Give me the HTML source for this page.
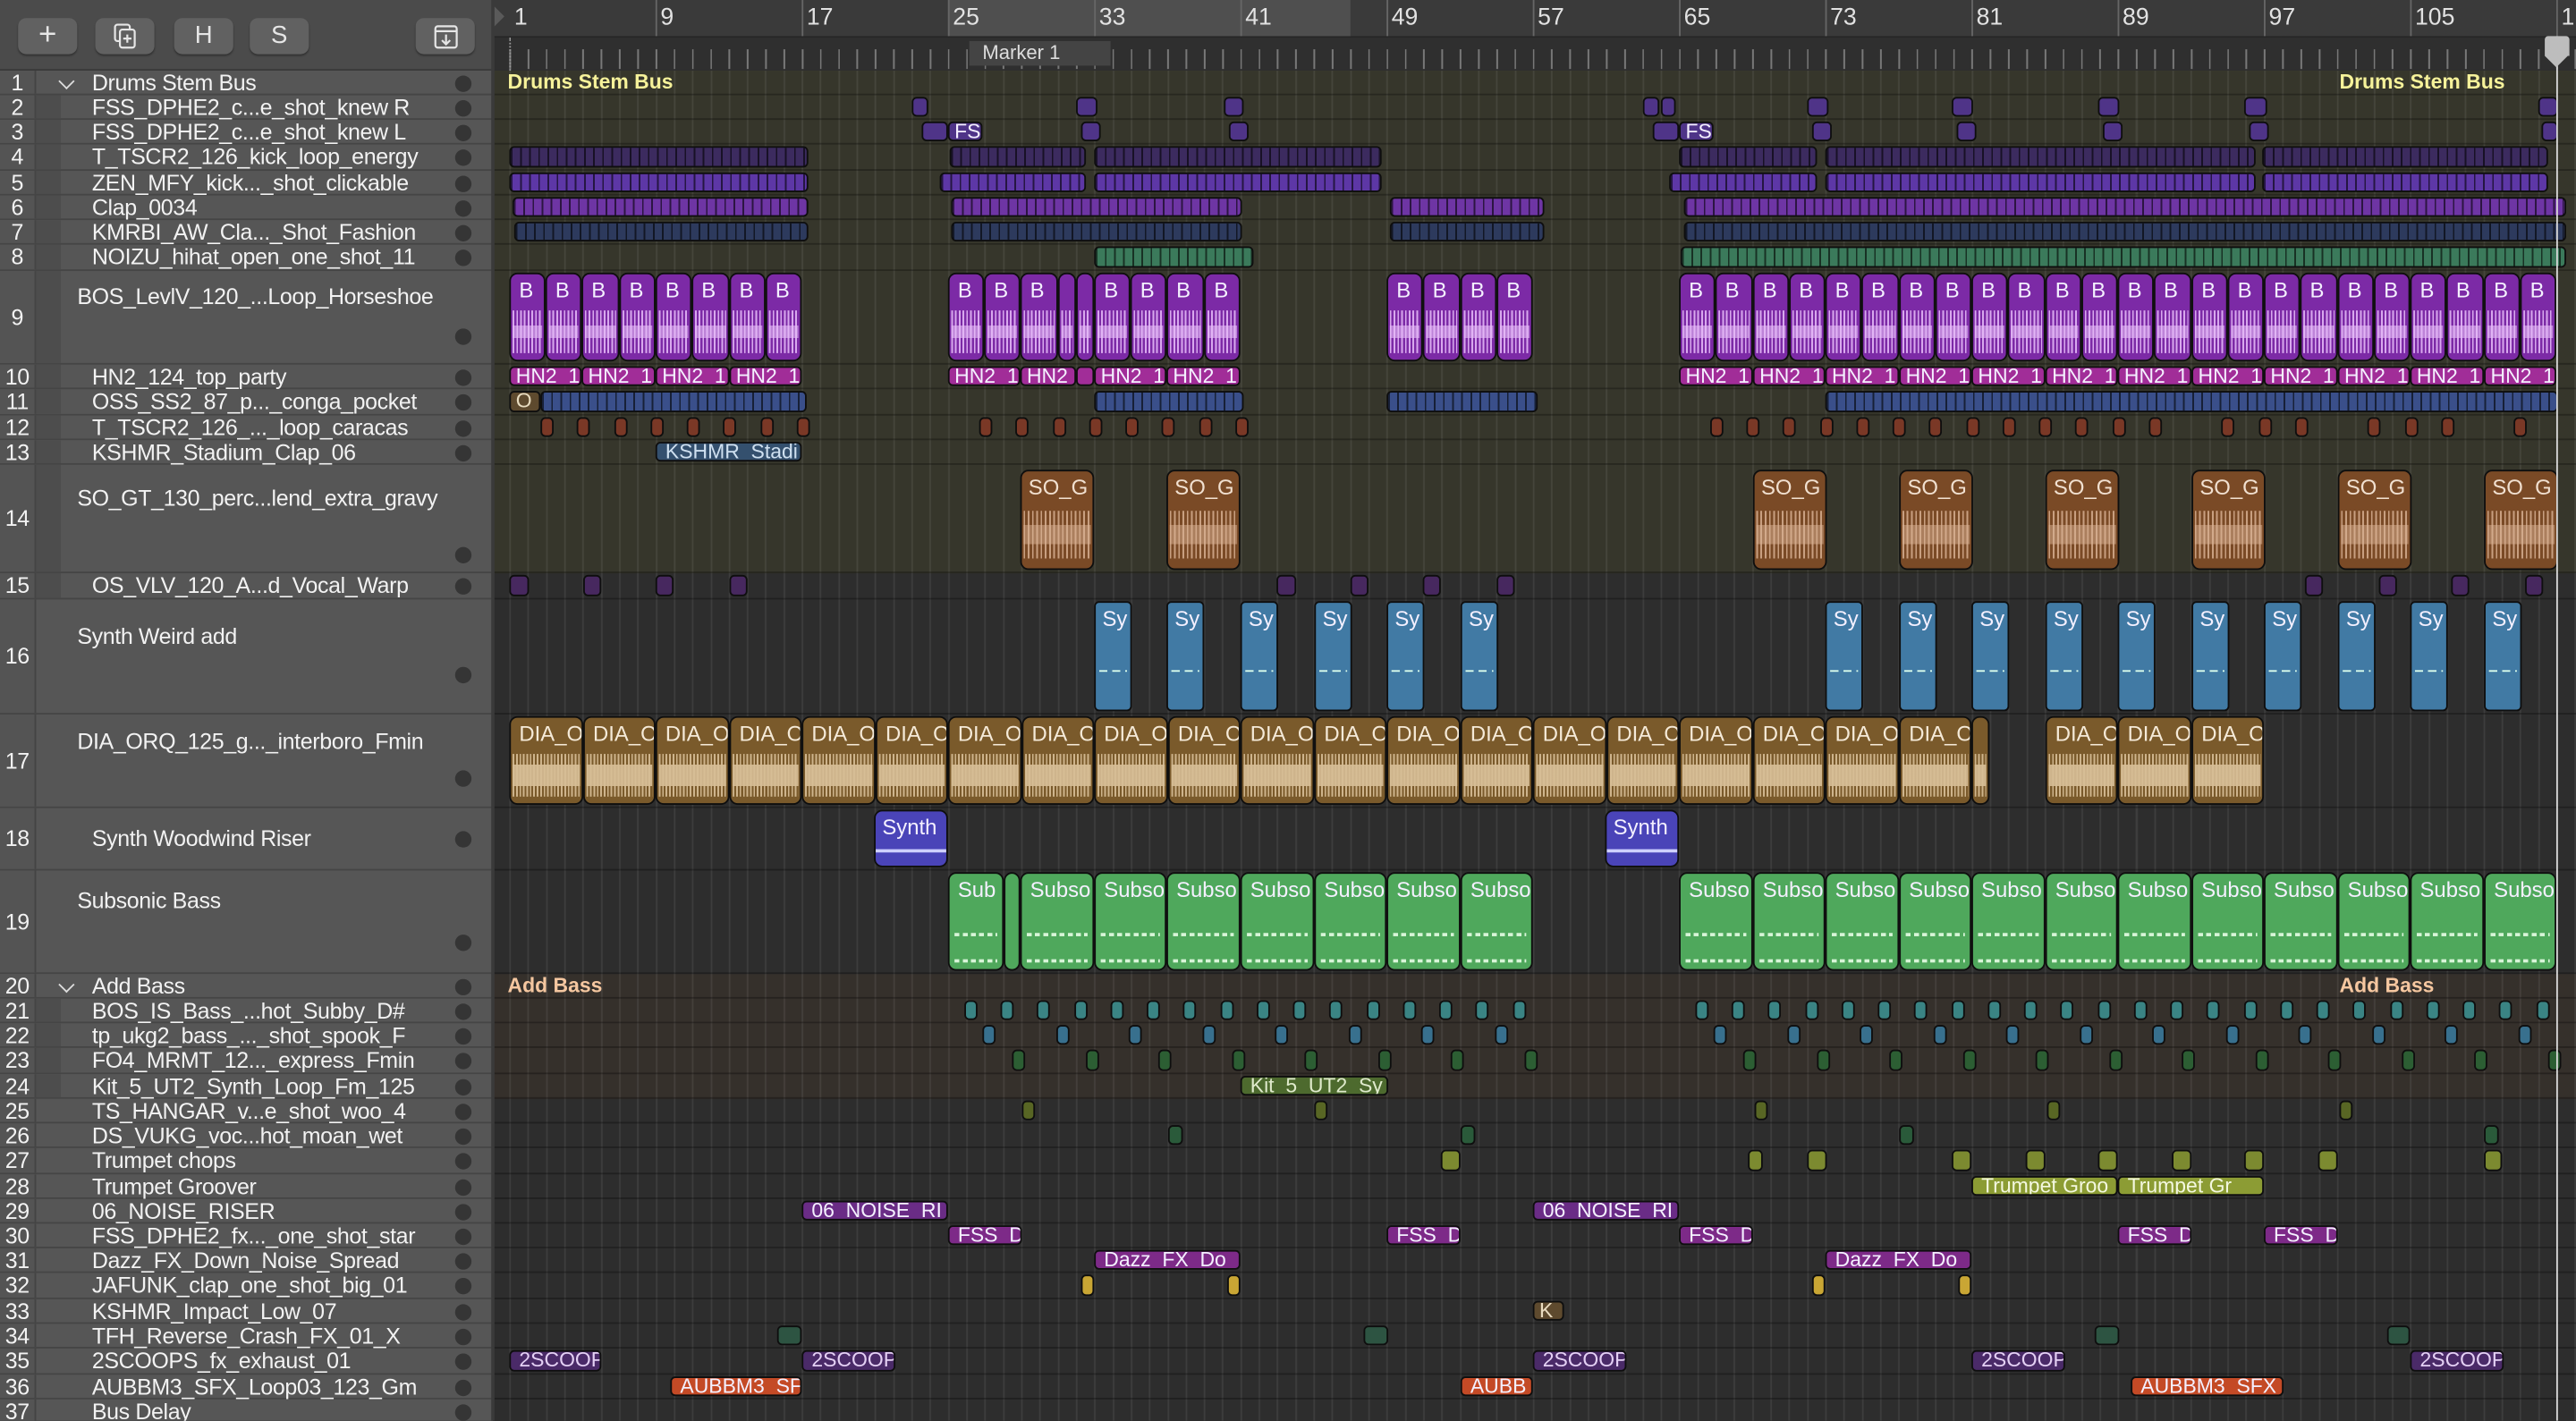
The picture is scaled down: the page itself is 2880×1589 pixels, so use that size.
<!DOCTYPE html><html><head><meta charset="utf-8"><style>
*{margin:0;padding:0}
html,body{width:2880px;height:1588px;overflow:hidden;background:#2d2d2d}
#s{position:absolute;left:0;top:0;width:1568px;height:865px;transform:scale(1.83673);transform-origin:0 0;font-family:"Liberation Sans",sans-serif;overflow:hidden;background:#2d2d2d}
.a{position:absolute}
#lp{position:absolute;left:0;top:0;width:300px;height:865px;background:#4d4d4d}
.btn{position:absolute;top:11px;width:36px;height:22px;background:#616161;border-radius:5px;box-shadow:0 1px 1px #333;color:#e6e6e6;font-size:15px;text-align:center;line-height:22px}
.lr{position:absolute;left:0;width:300px;border-bottom:1px solid #454545;box-sizing:border-box;background:#565656;color:#f2f2f2;font-size:13.6px;letter-spacing:-.2px}
.lr .n{position:absolute;left:0;width:21px;height:100%;background:#545454;border-right:1px solid #444;text-align:center;line-height:15px;top:0}
.lr .t{position:absolute;left:56px;white-space:nowrap;line-height:15px;top:0}
.lr .d{position:absolute;left:277px;width:10px;height:10px;border-radius:50%;background:#353535;top:2.5px}
.lr .g{position:absolute;left:22px;width:15px;top:0;height:100%;background:#4d4d4d}
.chev{position:absolute;left:37px;top:3px;width:6px;height:6px;border-right:1.3px solid #ddd;border-bottom:1.3px solid #ddd;transform:rotate(45deg)}
.row{position:absolute;left:0;width:1568px;border-bottom:1px solid rgba(0,0,0,.28);box-sizing:border-box}
b{position:absolute;top:1px;bottom:1px;border:1px solid #0e0e0e;border-radius:3px;box-sizing:border-box;color:#f4f0ff;font-weight:normal;font-size:12.5px;line-height:11.5px;padding-left:3px;overflow:hidden;white-space:nowrap}
.st{background-image:repeating-linear-gradient(90deg,rgba(0,0,0,.6) 0 1px,transparent 1px 5.56px)}
.pd{background-color:#3c2b5f}.pm{background-color:#5d37a6}.pv{background-color:#6e35a4}.nv{background-color:#2d3a5d}.gr{background-color:#3b7a5b}
.pu{background-color:#4f3488}
.B{background:#7c2aa6;border-radius:5px;padding:3px 0 0 5px;font-size:13px;line-height:14px}
.B i,.D i{position:absolute;left:1px;right:1px;top:22px;bottom:4px;background:repeating-linear-gradient(90deg,rgba(232,190,250,.85) 0 1px,transparent 1px 2.3px),linear-gradient(180deg,transparent 35%,rgba(232,190,250,.6) 35% 65%,transparent 65%)}
.hn{background:#a12d98}.bl{background-color:#3a4f8a}.br{background:#7a3826}.ks{background:#34506e;color:#cfe0f0}
.so{background:#7a4a26;border-radius:5px;padding:3px 0 0 4px;font-size:13px;line-height:14px;color:#f1e0d0}
.so i{position:absolute;left:1px;right:1px;top:24px;bottom:6px;background:repeating-linear-gradient(90deg,rgba(220,180,150,.8) 0 1px,transparent 1px 2.6px),linear-gradient(180deg,transparent 30%,rgba(220,180,150,.5) 30% 70%,transparent 70%)}
.vp{background:#47285f}
.sy{background:#417aa4;padding:3px 0 0 4px;font-size:13px;line-height:14px}
.sy i{position:absolute;left:2px;right:2px;top:41px;height:1px;background:repeating-linear-gradient(90deg,#dfe 0 5px,transparent 5px 8px)}
.D{background:#7a5a2b;border-radius:5px;padding:3px 0 0 5px;color:#f5ead8;font-size:13px;line-height:14px}
.D i{background:repeating-linear-gradient(90deg,rgba(215,190,150,.9) 0 1px,transparent 1px 2.1px),linear-gradient(180deg,transparent 25%,rgba(215,190,150,.9) 25% 75%,transparent 75%)}
.sn{background:#4a44b8;border-radius:5px;padding:3px 0 0 4px;font-size:13px;line-height:14px}
.sn i{position:absolute;left:0;right:0;top:23px;height:2px;background:#cfd0ff}
.sb{background:#4fa85c;border-radius:5px;padding:3px 0 0 5px;font-size:13px;line-height:14px}
.sb i{position:absolute;left:3px;right:3px;height:2px;background:repeating-linear-gradient(90deg,#d8f5d8 0 3px,transparent 3px 5px)}
.te{background:#3a8484}.tb{background:#38708e}.dg{background:#2c5e33}.kg{background:#4d6a2e;color:#dfeacc}
.ol{background:#586624}.g2{background:#2a5a3a}.o2{background:#7c8a30}.tg{background:#8c9c34;color:#f4f8e0}
.nz{background:#6a2c86}.fs{background:#7d2a88}.yl{background:#c9a634}.kb{background:#5e4a2e;color:#eadcc0}
.dk{background:#2d5442}.sc{background:#4a2a68;color:#e4d0f4}.or{background:#c44a26}
</style></head><body><div id="s">
<div class="a" style="left:300px;top:43px;width:1268px;height:306px;background:#36362b"></div>
<div class="a" style="left:300px;top:593px;width:1268px;height:76px;background:#35302b"></div>
<div class="a" style="left:300px;top:43px;width:1268px;height:822px;background-image:repeating-linear-gradient(90deg,rgba(255,255,255,.075) 0 1px,transparent 1px 11.125px);background-position:10px 0"></div>
<div class="a" style="left:300px;top:0;width:1268px;height:43px;background:#2f2f2f"></div>
<div class="a" style="left:300px;top:0;width:1268px;height:22px;background:#3a3a3a;border-bottom:1px solid #262626"></div>
<div class="a" style="left:577px;top:0;width:245px;height:22px;background:#4f4f4f"></div>
<div class="a" style="left:300px;top:23px;width:1268px;height:19px;background-image:repeating-linear-gradient(90deg,rgba(255,255,255,.35) 0 1px,transparent 1px 11.125px);background-position:10px 0;background-size:100% 12px;background-repeat:repeat-x;background-position-y:7px"></div>
<div class="a" style="left:300px;top:3px;width:0;height:0;border-top:7px solid transparent;border-bottom:7px solid transparent;border-left:7px solid #5a5a5a"></div>
<div class="a" style="left:590px;top:25px;width:86px;height:15px;background:#444;color:#ddd;font-size:12px;line-height:15px;padding-left:8px;box-sizing:border-box">Marker 1</div>
<div class="a" style="top:2px;left:0;width:1568px;height:20px;color:#e2e2e2;font-size:14.5px;line-height:18px">
<span class="a" style="left:313px">1</span><span class="a" style="left:402px">9</span><span class="a" style="left:491px">17</span><span class="a" style="left:580px">25</span><span class="a" style="left:669px">33</span><span class="a" style="left:758px">41</span><span class="a" style="left:847px">49</span><span class="a" style="left:936px">57</span><span class="a" style="left:1025px">65</span><span class="a" style="left:1114px">73</span><span class="a" style="left:1203px">81</span><span class="a" style="left:1292px">89</span><span class="a" style="left:1381px">97</span><span class="a" style="left:1470px">105</span><span class="a" style="left:1559px">1</span>
</div>
<div class="a" style="left:399px;top:0;width:1px;height:22px;background:#666;box-shadow:89px 0 #666,178px 0 #666,267px 0 #666,356px 0 #666,445px 0 #666,534px 0 #666,623px 0 #666,712px 0 #666,801px 0 #666,890px 0 #666,979px 0 #666,1068px 0 #666,1157px 0 #666"></div>
<div class="a" style="left:310px;top:23px;width:1px;height:20px;border-left:1px dotted #999"></div>

<div class="row" style="top:43px;height:15px"><span class="a" style="left:309px;top:0;color:#f6f29a;font-size:12.5px;font-weight:bold;line-height:15px">Drums Stem Bus</span><span class="a" style="left:1424px;top:0;color:#f6f29a;font-size:12.5px;font-weight:bold;line-height:15px">Drums Stem Bus</span></div>
<div class="row" style="top:58px;height:15px"><b class="pu" style="left:555px;width:10px"></b><b class="pu" style="left:655px;width:13px"></b><b class="pu" style="left:745px;width:12px"></b><b class="pu" style="left:1000px;width:10px"></b><b class="pu" style="left:1011px;width:9px"></b><b class="pu" style="left:1100px;width:13px"></b><b class="pu" style="left:1188px;width:13px"></b><b class="pu" style="left:1277px;width:13px"></b><b class="pu" style="left:1366px;width:14px"></b><b class="pu" style="left:1545px;width:12px"></b></div>
<div class="row" style="top:73px;height:15px"><b class="pu" style="left:561px;width:16px"></b><b class="pu" style="left:577px;width:21px;padding-left:3px">FS</b><b class="pu" style="left:658px;width:12px"></b><b class="pu" style="left:748px;width:12px"></b><b class="pu" style="left:1006px;width:16px"></b><b class="pu" style="left:1022px;width:21px">FS</b><b class="pu" style="left:1103px;width:12px"></b><b class="pu" style="left:1191px;width:12px"></b><b class="pu" style="left:1280px;width:12px"></b><b class="pu" style="left:1369px;width:12px"></b><b class="pu" style="left:1547px;width:10px"></b></div>
<div class="row" style="top:88px;height:16px"><b class="pd st" style="left:310px;width:182px"></b><b class="pd st" style="left:578px;width:83px"></b><b class="pd st" style="left:666px;width:175px"></b><b class="pd st" style="left:1022px;width:84px"></b><b class="pd st" style="left:1111px;width:262px"></b><b class="pd st" style="left:1377px;width:174px"></b></div>
<div class="row" style="top:104px;height:15px"><b class="pm st" style="left:310px;width:182px"></b><b class="pm st" style="left:572px;width:89px"></b><b class="pm st" style="left:666px;width:175px"></b><b class="pm st" style="left:1016px;width:90px"></b><b class="pm st" style="left:1111px;width:262px"></b><b class="pm st" style="left:1377px;width:174px"></b></div>
<div class="row" style="top:119px;height:15px"><b class="pv st" style="left:312px;width:180px"></b><b class="pv st" style="left:579px;width:177px"></b><b class="pv st" style="left:846px;width:94px"></b><b class="pv st" style="left:1025px;width:537px"></b></div>
<div class="row" style="top:134px;height:15px"><b class="nv st" style="left:313px;width:179px"></b><b class="nv st" style="left:579px;width:177px"></b><b class="nv st" style="left:846px;width:94px"></b><b class="nv st" style="left:1025px;width:537px"></b></div>
<div class="row" style="top:149px;height:16px"><b class="gr st" style="left:666px;width:97px"></b><b class="gr st" style="left:1023px;width:539px"></b></div>
<div class="row" style="top:165px;height:57px">
<b class="B" style="left:310px;width:22px">B<i></i></b><b class="B" style="left:332px;width:22px">B<i></i></b><b class="B" style="left:354px;width:23px">B<i></i></b><b class="B" style="left:377px;width:22px">B<i></i></b><b class="B" style="left:399px;width:22px">B<i></i></b><b class="B" style="left:421px;width:23px">B<i></i></b><b class="B" style="left:444px;width:22px">B<i></i></b><b class="B" style="left:466px;width:22px">B<i></i></b>
<b class="B" style="left:577px;width:22px">B<i></i></b><b class="B" style="left:599px;width:22px">B<i></i></b><b class="B" style="left:621px;width:23px">B<i></i></b><b class="B" style="left:644px;width:11px"><i></i></b><b class="B" style="left:655px;width:11px"><i></i></b><b class="B" style="left:666px;width:22px">B<i></i></b><b class="B" style="left:688px;width:22px">B<i></i></b><b class="B" style="left:710px;width:23px">B<i></i></b><b class="B" style="left:733px;width:22px">B<i></i></b>
<b class="B" style="left:844px;width:22px">B<i></i></b><b class="B" style="left:866px;width:23px">B<i></i></b><b class="B" style="left:889px;width:22px">B<i></i></b><b class="B" style="left:911px;width:22px">B<i></i></b>
<b class="B" style="left:1022px;width:22px">B<i></i></b><b class="B" style="left:1044px;width:23px">B<i></i></b><b class="B" style="left:1067px;width:22px">B<i></i></b><b class="B" style="left:1089px;width:22px">B<i></i></b><b class="B" style="left:1111px;width:22px">B<i></i></b><b class="B" style="left:1133px;width:23px">B<i></i></b><b class="B" style="left:1156px;width:22px">B<i></i></b><b class="B" style="left:1178px;width:22px">B<i></i></b><b class="B" style="left:1200px;width:22px">B<i></i></b><b class="B" style="left:1222px;width:23px">B<i></i></b><b class="B" style="left:1245px;width:22px">B<i></i></b><b class="B" style="left:1267px;width:22px">B<i></i></b><b class="B" style="left:1289px;width:22px">B<i></i></b><b class="B" style="left:1311px;width:23px">B<i></i></b><b class="B" style="left:1334px;width:22px">B<i></i></b><b class="B" style="left:1356px;width:22px">B<i></i></b><b class="B" style="left:1378px;width:22px">B<i></i></b><b class="B" style="left:1400px;width:23px">B<i></i></b><b class="B" style="left:1423px;width:22px">B<i></i></b><b class="B" style="left:1445px;width:22px">B<i></i></b><b class="B" style="left:1467px;width:22px">B<i></i></b><b class="B" style="left:1489px;width:23px">B<i></i></b><b class="B" style="left:1512px;width:22px">B<i></i></b><b class="B" style="left:1534px;width:22px">B<i></i></b>
</div>
<div class="row" style="top:222px;height:15px">
<b class="hn" style="left:310px;width:44px">HN2_1</b><b class="hn" style="left:354px;width:45px">HN2_1</b><b class="hn" style="left:399px;width:45px">HN2_1</b><b class="hn" style="left:444px;width:44px">HN2_1</b>
<b class="hn" style="left:577px;width:44px">HN2_1</b><b class="hn" style="left:621px;width:34px">HN2</b><b class="hn" style="left:655px;width:11px"></b><b class="hn" style="left:666px;width:44px">HN2_1</b><b class="hn" style="left:710px;width:45px">HN2_1</b>
<b class="hn" style="left:1022px;width:45px">HN2_1</b><b class="hn" style="left:1067px;width:44px">HN2_1</b><b class="hn" style="left:1111px;width:45px">HN2_1</b><b class="hn" style="left:1156px;width:44px">HN2_1</b><b class="hn" style="left:1200px;width:45px">HN2_1</b><b class="hn" style="left:1245px;width:44px">HN2_1</b><b class="hn" style="left:1289px;width:45px">HN2_1</b><b class="hn" style="left:1334px;width:44px">HN2_1</b><b class="hn" style="left:1378px;width:45px">HN2_1</b><b class="hn" style="left:1423px;width:44px">HN2_1</b><b class="hn" style="left:1467px;width:45px">HN2_1</b><b class="hn" style="left:1512px;width:44px">HN2_1</b>
</div>
<div class="row" style="top:237px;height:16px"><b style="left:310px;width:19px;background:#5e4a2e;color:#e8dcc0">O</b><b class="bl st" style="left:329px;width:162px"></b><b class="bl st" style="left:666px;width:91px"></b><b class="bl st" style="left:844px;width:92px"></b><b class="bl st" style="left:1111px;width:446px"></b></div>
<div class="row" style="top:253px;height:15px">
<b class="br" style="left:329px;width:8px"></b><b class="br" style="left:351px;width:8px"></b><b class="br" style="left:374px;width:8px"></b><b class="br" style="left:396px;width:8px"></b><b class="br" style="left:418px;width:8px"></b><b class="br" style="left:440px;width:8px"></b><b class="br" style="left:463px;width:8px"></b><b class="br" style="left:485px;width:8px"></b>
<b class="br" style="left:596px;width:8px"></b><b class="br" style="left:618px;width:8px"></b><b class="br" style="left:641px;width:8px"></b><b class="br" style="left:663px;width:8px"></b><b class="br" style="left:685px;width:8px"></b><b class="br" style="left:707px;width:8px"></b><b class="br" style="left:730px;width:8px"></b><b class="br" style="left:752px;width:8px"></b>
<b class="br" style="left:1041px;width:8px"></b><b class="br" style="left:1063px;width:8px"></b><b class="br" style="left:1085px;width:8px"></b><b class="br" style="left:1108px;width:8px"></b><b class="br" style="left:1130px;width:8px"></b><b class="br" style="left:1152px;width:8px"></b><b class="br" style="left:1174px;width:8px"></b><b class="br" style="left:1197px;width:8px"></b><b class="br" style="left:1219px;width:8px"></b><b class="br" style="left:1241px;width:8px"></b><b class="br" style="left:1263px;width:8px"></b><b class="br" style="left:1286px;width:8px"></b><b class="br" style="left:1308px;width:8px"></b><b class="br" style="left:1352px;width:8px"></b><b class="br" style="left:1375px;width:8px"></b><b class="br" style="left:1397px;width:8px"></b><b class="br" style="left:1441px;width:8px"></b><b class="br" style="left:1464px;width:8px"></b><b class="br" style="left:1486px;width:8px"></b><b class="br" style="left:1530px;width:8px"></b>
</div>
<div class="row" style="top:268px;height:15px"><b class="ks" style="left:399px;width:89px;padding-left:5px">KSHMR_Stadi</b></div>
<div class="row" style="top:283px;height:66px">
<b class="so" style="left:621px;width:45px;top:3px">SO_G<i></i></b><b class="so" style="left:710px;width:45px;top:3px">SO_G<i></i></b><b class="so" style="left:1067px;width:45px;top:3px">SO_G<i></i></b><b class="so" style="left:1156px;width:45px;top:3px">SO_G<i></i></b><b class="so" style="left:1245px;width:45px;top:3px">SO_G<i></i></b><b class="so" style="left:1334px;width:45px;top:3px">SO_G<i></i></b><b class="so" style="left:1423px;width:45px;top:3px">SO_G<i></i></b><b class="so" style="left:1512px;width:45px;top:3px">SO_G<i></i></b>
</div>
<div class="row" style="top:349px;height:16px"><b class="vp" style="left:310px;width:12px"></b><b class="vp" style="left:355px;width:11px"></b><b class="vp" style="left:399px;width:11px"></b><b class="vp" style="left:444px;width:11px"></b><b class="vp" style="left:777px;width:12px"></b><b class="vp" style="left:822px;width:11px"></b><b class="vp" style="left:866px;width:11px"></b><b class="vp" style="left:911px;width:11px"></b><b class="vp" style="left:1403px;width:11px"></b><b class="vp" style="left:1448px;width:11px"></b><b class="vp" style="left:1492px;width:11px"></b><b class="vp" style="left:1537px;width:11px"></b></div>
<div class="row" style="top:365px;height:70px">
<b class="sy" style="left:666px;width:23px">Sy<i></i></b><b class="sy" style="left:710px;width:23px">Sy<i></i></b><b class="sy" style="left:755px;width:23px">Sy<i></i></b><b class="sy" style="left:800px;width:23px">Sy<i></i></b><b class="sy" style="left:844px;width:23px">Sy<i></i></b><b class="sy" style="left:889px;width:23px">Sy<i></i></b>
<b class="sy" style="left:1111px;width:23px">Sy<i></i></b><b class="sy" style="left:1156px;width:23px">Sy<i></i></b><b class="sy" style="left:1200px;width:23px">Sy<i></i></b><b class="sy" style="left:1245px;width:23px">Sy<i></i></b><b class="sy" style="left:1289px;width:23px">Sy<i></i></b><b class="sy" style="left:1334px;width:23px">Sy<i></i></b><b class="sy" style="left:1378px;width:23px">Sy<i></i></b><b class="sy" style="left:1423px;width:23px">Sy<i></i></b><b class="sy" style="left:1467px;width:23px">Sy<i></i></b><b class="sy" style="left:1512px;width:23px">Sy<i></i></b>
</div>
<div class="row" style="top:435px;height:57px">
<b class="D" style="left:310px;width:45px">DIA_O<i></i></b><b class="D" style="left:355px;width:44px">DIA_O<i></i></b><b class="D" style="left:399px;width:45px">DIA_O<i></i></b><b class="D" style="left:444px;width:44px">DIA_O<i></i></b><b class="D" style="left:488px;width:45px">DIA_O<i></i></b><b class="D" style="left:533px;width:44px">DIA_O<i></i></b><b class="D" style="left:577px;width:45px">DIA_O<i></i></b><b class="D" style="left:622px;width:44px">DIA_O<i></i></b><b class="D" style="left:666px;width:45px">DIA_O<i></i></b><b class="D" style="left:711px;width:44px">DIA_O<i></i></b><b class="D" style="left:755px;width:45px">DIA_O<i></i></b><b class="D" style="left:800px;width:44px">DIA_O<i></i></b><b class="D" style="left:844px;width:45px">DIA_O<i></i></b><b class="D" style="left:889px;width:44px">DIA_O<i></i></b><b class="D" style="left:933px;width:45px">DIA_O<i></i></b><b class="D" style="left:978px;width:44px">DIA_O<i></i></b><b class="D" style="left:1022px;width:45px">DIA_O<i></i></b><b class="D" style="left:1067px;width:44px">DIA_O<i></i></b><b class="D" style="left:1111px;width:45px">DIA_O<i></i></b><b class="D" style="left:1156px;width:44px">DIA_O<i></i></b><b class="D" style="left:1200px;width:11px"><i></i></b>
<b class="D" style="left:1245px;width:44px">DIA_O<i></i></b><b class="D" style="left:1289px;width:45px">DIA_O<i></i></b><b class="D" style="left:1334px;width:44px">DIA_O<i></i></b>
</div>
<div class="row" style="top:492px;height:38px"><b class="sn" style="left:532px;width:45px">Synth<i></i></b><b class="sn" style="left:977px;width:45px">Synth<i></i></b></div>
<div class="row" style="top:530px;height:63px">
<b class="sb" style="left:577px;width:34px">Sub<i style="top:36px"></i><i style="top:52px"></i></b><b class="sb" style="left:611px;width:10px"></b>
<b class="sb" style="left:621px;width:45px">Subso<i style="top:36px"></i><i style="top:52px"></i></b><b class="sb" style="left:666px;width:44px">Subso<i style="top:36px"></i><i style="top:52px"></i></b><b class="sb" style="left:710px;width:45px">Subso<i style="top:36px"></i><i style="top:52px"></i></b><b class="sb" style="left:755px;width:45px">Subso<i style="top:36px"></i><i style="top:52px"></i></b><b class="sb" style="left:800px;width:44px">Subso<i style="top:36px"></i><i style="top:52px"></i></b><b class="sb" style="left:844px;width:45px">Subso<i style="top:36px"></i><i style="top:52px"></i></b><b class="sb" style="left:889px;width:44px">Subso<i style="top:36px"></i><i style="top:52px"></i></b>
<b class="sb" style="left:1022px;width:45px">Subso<i style="top:36px"></i><i style="top:52px"></i></b><b class="sb" style="left:1067px;width:44px">Subso<i style="top:36px"></i><i style="top:52px"></i></b><b class="sb" style="left:1111px;width:45px">Subso<i style="top:36px"></i><i style="top:52px"></i></b><b class="sb" style="left:1156px;width:44px">Subso<i style="top:36px"></i><i style="top:52px"></i></b><b class="sb" style="left:1200px;width:45px">Subso<i style="top:36px"></i><i style="top:52px"></i></b><b class="sb" style="left:1245px;width:44px">Subso<i style="top:36px"></i><i style="top:52px"></i></b><b class="sb" style="left:1289px;width:45px">Subso<i style="top:36px"></i><i style="top:52px"></i></b><b class="sb" style="left:1334px;width:44px">Subso<i style="top:36px"></i><i style="top:52px"></i></b><b class="sb" style="left:1378px;width:45px">Subso<i style="top:36px"></i><i style="top:52px"></i></b><b class="sb" style="left:1423px;width:44px">Subso<i style="top:36px"></i><i style="top:52px"></i></b><b class="sb" style="left:1467px;width:45px">Subso<i style="top:36px"></i><i style="top:52px"></i></b><b class="sb" style="left:1512px;width:44px">Subso<i style="top:36px"></i><i style="top:52px"></i></b>
</div>
<div class="row" style="top:593px;height:15px"><span class="a" style="left:309px;top:0;color:#f5c7a0;font-size:12.5px;font-weight:bold;line-height:15px">Add Bass</span><span class="a" style="left:1424px;top:0;color:#f5c7a0;font-size:12.5px;font-weight:bold;line-height:15px">Add Bass</span></div>
<div class="row" style="top:608px;height:15px">
<b class="te" style="left:587px;width:8px"></b><b class="te" style="left:609px;width:8px"></b><b class="te" style="left:631px;width:8px"></b><b class="te" style="left:654px;width:8px"></b><b class="te" style="left:676px;width:8px"></b><b class="te" style="left:698px;width:8px"></b><b class="te" style="left:720px;width:8px"></b><b class="te" style="left:743px;width:8px"></b><b class="te" style="left:765px;width:8px"></b><b class="te" style="left:787px;width:8px"></b><b class="te" style="left:809px;width:8px"></b><b class="te" style="left:832px;width:8px"></b><b class="te" style="left:854px;width:8px"></b><b class="te" style="left:876px;width:8px"></b><b class="te" style="left:898px;width:8px"></b><b class="te" style="left:921px;width:8px"></b>
<b class="te" style="left:1032px;width:8px"></b><b class="te" style="left:1054px;width:8px"></b><b class="te" style="left:1076px;width:8px"></b><b class="te" style="left:1099px;width:8px"></b><b class="te" style="left:1121px;width:8px"></b><b class="te" style="left:1143px;width:8px"></b><b class="te" style="left:1165px;width:8px"></b><b class="te" style="left:1188px;width:8px"></b><b class="te" style="left:1210px;width:8px"></b><b class="te" style="left:1232px;width:8px"></b><b class="te" style="left:1254px;width:8px"></b><b class="te" style="left:1277px;width:8px"></b><b class="te" style="left:1299px;width:8px"></b><b class="te" style="left:1321px;width:8px"></b><b class="te" style="left:1343px;width:8px"></b><b class="te" style="left:1366px;width:8px"></b><b class="te" style="left:1388px;width:8px"></b><b class="te" style="left:1410px;width:8px"></b><b class="te" style="left:1432px;width:8px"></b><b class="te" style="left:1455px;width:8px"></b><b class="te" style="left:1477px;width:8px"></b><b class="te" style="left:1499px;width:8px"></b><b class="te" style="left:1521px;width:8px"></b><b class="te" style="left:1544px;width:8px"></b>
</div>
<div class="row" style="top:623px;height:15px">
<b class="tb" style="left:598px;width:8px"></b><b class="tb" style="left:643px;width:8px"></b><b class="tb" style="left:687px;width:8px"></b><b class="tb" style="left:732px;width:8px"></b><b class="tb" style="left:776px;width:8px"></b><b class="tb" style="left:821px;width:8px"></b><b class="tb" style="left:865px;width:8px"></b><b class="tb" style="left:910px;width:8px"></b>
<b class="tb" style="left:1043px;width:8px"></b><b class="tb" style="left:1088px;width:8px"></b><b class="tb" style="left:1132px;width:8px"></b><b class="tb" style="left:1177px;width:8px"></b><b class="tb" style="left:1221px;width:8px"></b><b class="tb" style="left:1266px;width:8px"></b><b class="tb" style="left:1310px;width:8px"></b><b class="tb" style="left:1355px;width:8px"></b><b class="tb" style="left:1399px;width:8px"></b><b class="tb" style="left:1444px;width:8px"></b><b class="tb" style="left:1488px;width:8px"></b><b class="tb" style="left:1533px;width:8px"></b>
</div>
<div class="row" style="top:638px;height:16px">
<b class="dg" style="left:616px;width:8px"></b><b class="dg" style="left:661px;width:8px"></b><b class="dg" style="left:705px;width:8px"></b><b class="dg" style="left:750px;width:8px"></b><b class="dg" style="left:794px;width:8px"></b><b class="dg" style="left:839px;width:8px"></b><b class="dg" style="left:883px;width:8px"></b><b class="dg" style="left:928px;width:8px"></b>
<b class="dg" style="left:1061px;width:8px"></b><b class="dg" style="left:1106px;width:8px"></b><b class="dg" style="left:1150px;width:8px"></b><b class="dg" style="left:1195px;width:8px"></b><b class="dg" style="left:1239px;width:8px"></b><b class="dg" style="left:1284px;width:8px"></b><b class="dg" style="left:1328px;width:8px"></b><b class="dg" style="left:1373px;width:8px"></b><b class="dg" style="left:1417px;width:8px"></b><b class="dg" style="left:1462px;width:8px"></b><b class="dg" style="left:1506px;width:8px"></b><b class="dg" style="left:1551px;width:8px"></b>
</div>
<div class="row" style="top:654px;height:15px"><b class="kg" style="left:755px;width:90px;padding-left:5px">Kit_5_UT2_Sy</b></div>
<div class="row" style="top:669px;height:15px"><b class="ol" style="left:622px;width:8px"></b><b class="ol" style="left:800px;width:8px"></b><b class="ol" style="left:1068px;width:8px"></b><b class="ol" style="left:1246px;width:8px"></b><b class="ol" style="left:1424px;width:8px"></b></div>
<div class="row" style="top:684px;height:15px"><b class="g2" style="left:711px;width:9px"></b><b class="g2" style="left:889px;width:9px"></b><b class="g2" style="left:1156px;width:9px"></b><b class="g2" style="left:1512px;width:9px"></b></div>
<div class="row" style="top:699px;height:16px"><b class="o2" style="left:877px;width:12px"></b><b class="o2" style="left:1064px;width:9px"></b><b class="o2" style="left:1100px;width:12px"></b><b class="o2" style="left:1188px;width:12px"></b><b class="o2" style="left:1233px;width:12px"></b><b class="o2" style="left:1277px;width:12px"></b><b class="o2" style="left:1322px;width:12px"></b><b class="o2" style="left:1366px;width:12px"></b><b class="o2" style="left:1411px;width:12px"></b><b class="o2" style="left:1512px;width:11px"></b></div>
<div class="row" style="top:715px;height:15px"><b class="tg" style="left:1200px;width:89px;padding-left:5px">Trumpet Groo</b><b class="tg" style="left:1289px;width:89px;padding-left:5px">Trumpet Gr</b></div>
<div class="row" style="top:730px;height:15px"><b class="nz" style="left:488px;width:89px;padding-left:5px">06_NOISE_RI</b><b class="nz" style="left:933px;width:89px;padding-left:5px">06_NOISE_RI</b></div>
<div class="row" style="top:745px;height:15px"><b class="fs" style="left:577px;width:45px;padding-left:5px">FSS_D</b><b class="fs" style="left:844px;width:45px;padding-left:5px">FSS_D</b><b class="fs" style="left:1022px;width:45px;padding-left:5px">FSS_D</b><b class="fs" style="left:1289px;width:45px;padding-left:5px">FSS_D</b><b class="fs" style="left:1378px;width:45px;padding-left:5px">FSS_D</b></div>
<div class="row" style="top:760px;height:15px"><b class="fs" style="left:666px;width:89px;padding-left:5px">Dazz_FX_Do</b><b class="fs" style="left:1111px;width:89px;padding-left:5px">Dazz_FX_Do</b></div>
<div class="row" style="top:775px;height:16px"><b class="yl" style="left:658px;width:8px"></b><b class="yl" style="left:747px;width:8px"></b><b class="yl" style="left:1103px;width:8px"></b><b class="yl" style="left:1192px;width:8px"></b></div>
<div class="row" style="top:791px;height:15px"><b class="kb" style="left:933px;width:19px">K</b></div>
<div class="row" style="top:806px;height:15px"><b class="dk" style="left:473px;width:15px"></b><b class="dk" style="left:830px;width:15px"></b><b class="dk" style="left:1275px;width:15px"></b><b class="dk" style="left:1453px;width:14px"></b></div>
<div class="row" style="top:821px;height:16px"><b class="sc" style="left:310px;width:56px;padding-left:5px">2SCOOP</b><b class="sc" style="left:488px;width:57px;padding-left:5px">2SCOOP</b><b class="sc" style="left:933px;width:57px;padding-left:5px">2SCOOP</b><b class="sc" style="left:1200px;width:57px;padding-left:5px">2SCOOP</b><b class="sc" style="left:1467px;width:57px;padding-left:5px">2SCOOP</b></div>
<div class="row" style="top:837px;height:15px"><b class="or" style="left:408px;width:80px;padding-left:5px">AUBBM3_SF</b><b class="or" style="left:889px;width:44px;padding-left:5px">AUBB</b><b class="or" style="left:1297px;width:93px;padding-left:5px">AUBBM3_SFX</b></div>
<div class="row" style="top:852px;height:15px"></div>

<div class="a" style="left:1556px;top:22px;width:1px;height:843px;background:#d8d8d8"></div>
<div class="a" style="left:1549px;top:22px;width:15px;height:12px;background:#bdbdbd;border-radius:2px 2px 0 0"></div>
<div class="a" style="left:1549px;top:34px;width:0;height:0;border-left:7.5px solid transparent;border-right:7.5px solid transparent;border-top:7px solid #bdbdbd"></div>

<div id="lp">
<div class="a" style="left:0;top:0;width:300px;height:43px;background:#4b4b4b;border-bottom:1px solid #3a3a3a;box-sizing:border-box"></div>
<div class="btn" style="left:11px;font-size:19px">+</div>
<div class="btn" style="left:58px"><svg width="14" height="16" viewBox="0 0 14 16" style="margin-top:3px" fill="none" stroke="#e6e6e6" stroke-width="1.2"><rect x="1" y="1" width="9" height="10" rx="1.5"/><rect x="4" y="4" width="9" height="11" rx="1.5" fill="#616161"/><path d="M8.5 7v5M6 9.5h5"/></svg></div>
<div class="btn" style="left:106px">H</div>
<div class="btn" style="left:152px">S</div>
<div class="btn" style="left:253px"><svg width="15" height="15" viewBox="0 0 15 15" style="margin-top:4px" fill="none" stroke="#e6e6e6" stroke-width="1.2"><rect x="1" y="1" width="13" height="13" rx="1.5"/><path d="M1 4h13M7.5 6v6M5 9.5l2.5 2.5 2.5-2.5"/></svg></div>

<div class="lr" style="top:43px;height:15px"><div class="n">1</div><div class="chev"></div><span class="t">Drums Stem Bus</span><div class="d"></div></div>
<div class="lr" style="top:58px;height:15px"><div class="n">2</div><div class="g"></div><span class="t">FSS_DPHE2_c...e_shot_knew R</span><div class="d"></div></div>
<div class="lr" style="top:73px;height:15px"><div class="n">3</div><div class="g"></div><span class="t">FSS_DPHE2_c...e_shot_knew L</span><div class="d"></div></div>
<div class="lr" style="top:88px;height:16px"><div class="n">4</div><div class="g"></div><span class="t">T_TSCR2_126_kick_loop_energy</span><div class="d"></div></div>
<div class="lr" style="top:104px;height:15px"><div class="n">5</div><div class="g"></div><span class="t">ZEN_MFY_kick..._shot_clickable</span><div class="d"></div></div>
<div class="lr" style="top:119px;height:15px"><div class="n">6</div><div class="g"></div><span class="t">Clap_0034</span><div class="d"></div></div>
<div class="lr" style="top:134px;height:15px"><div class="n">7</div><div class="g"></div><span class="t">KMRBI_AW_Cla..._Shot_Fashion</span><div class="d"></div></div>
<div class="lr" style="top:149px;height:16px"><div class="n">8</div><div class="g"></div><span class="t">NOIZU_hihat_open_one_shot_11</span><div class="d"></div></div>
<div class="lr" style="top:165px;height:57px"><div class="n" style="line-height:57px">9</div><div class="g"></div><span class="t" style="left:47px;top:8px">BOS_LevlV_120_...Loop_Horseshoe</span><div class="d" style="top:35px"></div></div>
<div class="lr" style="top:222px;height:15px"><div class="n">10</div><div class="g"></div><span class="t">HN2_124_top_party</span><div class="d"></div></div>
<div class="lr" style="top:237px;height:16px"><div class="n">11</div><div class="g"></div><span class="t">OSS_SS2_87_p..._conga_pocket</span><div class="d"></div></div>
<div class="lr" style="top:253px;height:15px"><div class="n">12</div><div class="g"></div><span class="t">T_TSCR2_126_..._loop_caracas</span><div class="d"></div></div>
<div class="lr" style="top:268px;height:15px"><div class="n">13</div><div class="g"></div><span class="t">KSHMR_Stadium_Clap_06</span><div class="d"></div></div>
<div class="lr" style="top:283px;height:66px"><div class="n" style="line-height:66px">14</div><div class="g"></div><span class="t" style="left:47px;top:13px">SO_GT_130_perc...lend_extra_gravy</span><div class="d" style="top:50px"></div></div>
<div class="lr" style="top:349px;height:16px"><div class="n">15</div><div class="g"></div><span class="t">OS_VLV_120_A...d_Vocal_Warp</span><div class="d"></div></div>
<div class="lr" style="top:365px;height:70px"><div class="n" style="line-height:70px">16</div><span class="t" style="left:47px;top:15px">Synth Weird add</span><div class="d" style="top:41px"></div></div>
<div class="lr" style="top:435px;height:57px"><div class="n" style="line-height:57px">17</div><span class="t" style="left:47px;top:9px">DIA_ORQ_125_g..._interboro_Fmin</span><div class="d" style="top:34px"></div></div>
<div class="lr" style="top:492px;height:38px"><div class="n" style="line-height:38px">18</div><span class="t" style="top:11px">Synth Woodwind Riser</span><div class="d" style="top:14px"></div></div>
<div class="lr" style="top:530px;height:63px"><div class="n" style="line-height:63px">19</div><span class="t" style="left:47px;top:11px">Subsonic Bass</span><div class="d" style="top:39px"></div></div>
<div class="lr" style="top:593px;height:15px"><div class="n">20</div><div class="chev"></div><span class="t">Add Bass</span><div class="d"></div></div>
<div class="lr" style="top:608px;height:15px"><div class="n">21</div><div class="g"></div><span class="t">BOS_IS_Bass_...hot_Subby_D#</span><div class="d"></div></div>
<div class="lr" style="top:623px;height:15px"><div class="n">22</div><div class="g"></div><span class="t">tp_ukg2_bass_..._shot_spook_F</span><div class="d"></div></div>
<div class="lr" style="top:638px;height:16px"><div class="n">23</div><div class="g"></div><span class="t">FO4_MRMT_12..._express_Fmin</span><div class="d"></div></div>
<div class="lr" style="top:654px;height:15px"><div class="n">24</div><div class="g"></div><span class="t">Kit_5_UT2_Synth_Loop_Fm_125</span><div class="d"></div></div>
<div class="lr" style="top:669px;height:15px"><div class="n">25</div><span class="t">TS_HANGAR_v...e_shot_woo_4</span><div class="d"></div></div>
<div class="lr" style="top:684px;height:15px"><div class="n">26</div><span class="t">DS_VUKG_voc...hot_moan_wet</span><div class="d"></div></div>
<div class="lr" style="top:699px;height:16px"><div class="n">27</div><span class="t">Trumpet chops</span><div class="d"></div></div>
<div class="lr" style="top:715px;height:15px"><div class="n">28</div><span class="t">Trumpet Groover</span><div class="d"></div></div>
<div class="lr" style="top:730px;height:15px"><div class="n">29</div><span class="t">06_NOISE_RISER</span><div class="d"></div></div>
<div class="lr" style="top:745px;height:15px"><div class="n">30</div><span class="t">FSS_DPHE2_fx..._one_shot_star</span><div class="d"></div></div>
<div class="lr" style="top:760px;height:15px"><div class="n">31</div><span class="t">Dazz_FX_Down_Noise_Spread</span><div class="d"></div></div>
<div class="lr" style="top:775px;height:16px"><div class="n">32</div><span class="t">JAFUNK_clap_one_shot_big_01</span><div class="d"></div></div>
<div class="lr" style="top:791px;height:15px"><div class="n">33</div><span class="t">KSHMR_Impact_Low_07</span><div class="d"></div></div>
<div class="lr" style="top:806px;height:15px"><div class="n">34</div><span class="t">TFH_Reverse_Crash_FX_01_X</span><div class="d"></div></div>
<div class="lr" style="top:821px;height:16px"><div class="n">35</div><span class="t">2SCOOPS_fx_exhaust_01</span><div class="d"></div></div>
<div class="lr" style="top:837px;height:15px"><div class="n">36</div><span class="t">AUBBM3_SFX_Loop03_123_Gm</span><div class="d"></div></div>
<div class="lr" style="top:852px;height:15px"><div class="n">37</div><span class="t">Bus Delay</span><div class="d"></div></div>
</div>
<div class="a" style="left:299px;top:0;width:2px;height:865px;background:#3a3a3a"></div>
</div></body></html>
